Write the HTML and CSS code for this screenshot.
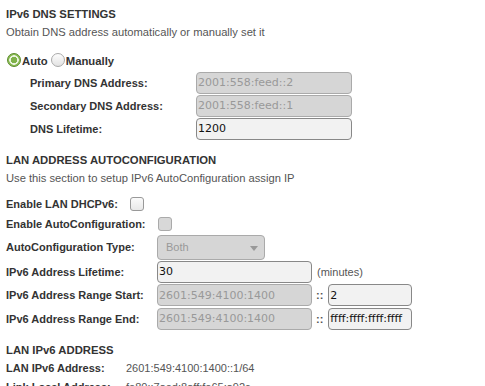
FILE: index.html
```html
<!DOCTYPE html>
<html>
<head>
<meta charset="utf-8">
<link rel="stylesheet" href="styles.css">
</head>
<body>
<div class="page">
  <h3 class="title first">IPv6 DNS SETTINGS</h3>
  <p class="desc">Obtain DNS address automatically or manually set it</p>
  <div class="radios">
    <span class="radio checked"></span><span class="rlabel">Auto</span>
    <span class="radio"></span><span class="rlabel">Manually</span>
  </div>
  <div class="dns">
    <div class="row dnsrow"><span class="lbl ind">Primary DNS Address:</span><span class="field dis wide">2001:558:feed::2</span></div>
    <div class="row dnsrow"><span class="lbl ind">Secondary DNS Address:</span><span class="field dis wide">2001:558:feed::1</span></div>
    <div class="row dnsrow"><span class="lbl ind">DNS Lifetime:</span><span class="field wide">1200</span></div>
  </div>

  <h3 class="title second">LAN ADDRESS AUTOCONFIGURATION</h3>
  <p class="desc">Use this section to setup IPv6 AutoConfiguration assign IP</p>
  <div class="row cbrow r1"><span class="lbl">Enable LAN DHCPv6:</span><span class="cb"></span></div>
  <div class="row cbrow r2"><span class="lbl">Enable AutoConfiguration:</span><span class="cb dcb"></span></div>
  <div class="row selrow"><span class="lbl col">AutoConfiguration Type:</span><span class="select">Both<span class="arrow"></span></span></div>
  <div class="row frow"><span class="lbl col">IPv6 Address Lifetime:</span><span class="field mid">30</span><span class="unit">(minutes)</span></div>
  <div class="row frow"><span class="lbl col">IPv6 Address Range Start:</span><span class="field dis mid">2601:549:4100:1400</span><span class="sep">::</span><span class="field small">2</span></div>
  <div class="row frow"><span class="lbl col">IPv6 Address Range End:</span><span class="field dis mid">2601:549:4100:1400</span><span class="sep">::</span><span class="field small">ffff:ffff:ffff:ffff</span></div>

  <h3 class="title third">LAN IPv6 ADDRESS</h3>
  <div class="row inforow"><span class="lbl col2">LAN IPv6 Address:</span><span class="val">2601:549:4100:1400::1/64</span></div>
  <div class="row inforow"><span class="lbl col2">Link Local Address:</span><span class="val">fe80::7aed:8aff:fe65:a92c</span></div>
</div>
</body>
</html>
```
FILE: styles.css
```css
html, body { margin: 0; padding: 0; background: #fff; }
body { font-family: "Liberation Sans", Arial, sans-serif; font-size: 11px; color: #333; }
.page { padding-left: 6px; }
.title { margin: 0; font-size: 11.3px; font-weight: bold; color: #333; line-height: 13px; }
.title.first { padding-top: 8px; }
.title.second { margin-top: 14px; }
.title.third { margin-top: 13px; margin-bottom: 2px; }
.desc { margin: 5px 0 0; color: #555; line-height: 13px; font-size: 11.2px; }
.radios { display: flex; align-items: flex-end; height: 16px; margin-top: 12px; }
.radio { width: 12px; height: 12px; border-radius: 50%; border: 1px solid #aaa; background: linear-gradient(#fdfdfd, #e2e2e2); margin-left: 1px; }
.radio.checked { border-color: #5a8a2a; background: radial-gradient(circle, #7fb24a 0 3px, #eaf3df 3.5px 4.5px, #8cbd55 5px); }
.rlabel { font-weight: bold; color: #333; margin-left: 1px; margin-right: 2px; line-height: 12px; font-size: 11.3px; }
.dns { margin-top: 4px; }
.row { display: flex; align-items: center; }
.lbl { font-weight: bold; color: #333; }
.lbl.ind { width: 166px; padding-left: 24px; box-sizing: border-box; flex: none; }
.dnsrow { height: 23px; }
.field { box-sizing: border-box; height: 22px; border: 1px solid #888; border-radius: 4px; background: #f2f2f2; font-family: "DejaVu Sans", sans-serif; font-size: 11px; color: #111; padding-left: 1px; display: flex; align-items: center; flex: none; }
.field.dis { background: #d6d6d6; color: #999; border-color: #aaa; }
.field.wide { width: 156px; }
.dns .field { margin-left: 24px; }
.field.mid { width: 155px; }
.field.small { width: 84px; }
.cbrow .cb { width: 12px; height: 12px; border: 1px solid #999; border-radius: 3px; background: linear-gradient(#fafafa, #e8e8e8); margin-left: 12px; }
.cbrow .dcb { background: #d8d8d8; border-color: #aaa; }
.r1 { height: 20px; margin-top: 9px; }
.r2 { height: 20px; }
.selrow { height: 26px; }
.lbl.col { width: 151px; flex: none; }
.select { box-sizing: border-box; width: 108px; height: 25px; border: 1px solid #aaa; border-radius: 4px; background: #d6d6d6; color: #999; display: flex; align-items: center; padding-left: 8px; position: relative; font-size: 11px; }
.arrow { position: absolute; right: 6px; top: 10px; width: 0; height: 0; border-left: 4px solid transparent; border-right: 4px solid transparent; border-top: 5px solid #999; }
.frow { height: 23.5px; }
.unit { margin-left: 5px; color: #555; }
.sep { margin: 0 5px 0 4px; color: #555; font-weight: bold; }
.inforow { height: 19px; }
.lbl.col2 { width: 120px; flex: none; }
.val { color: #555; }
```
